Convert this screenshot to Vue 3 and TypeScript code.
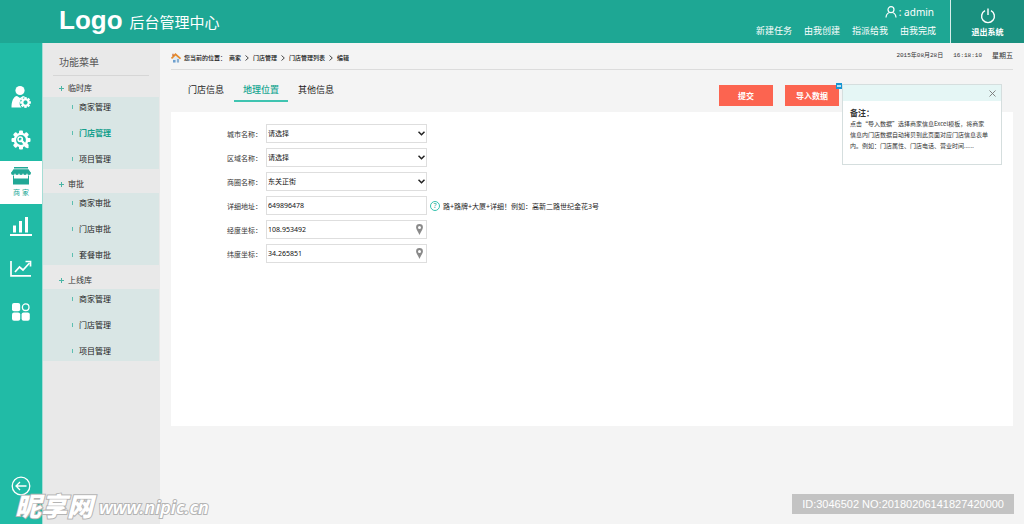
<script setup lang="ts">
import { ref } from 'vue'

type RailIcon = 'user' | 'gear' | 'shop' | 'bars' | 'trend' | 'grid'
interface RailItem { icon: RailIcon; label: string }
interface MenuGroup { title: string; items: string[] }
interface Field { id: string; label: string; kind: 'select' | 'text' | 'coord'; value: string; hint?: string }

const shortcuts: string[] = ['新建任务', '由我创建', '指派给我', '由我完成']

const rail: RailItem[] = [
  { icon: 'user', label: '用户' },
  { icon: 'gear', label: '设置' },
  { icon: 'shop', label: '商 家' },
  { icon: 'bars', label: '统计' },
  { icon: 'trend', label: '趋势' },
  { icon: 'grid', label: '应用' },
]
const activeRail = ref<RailIcon>('shop')

const groups: MenuGroup[] = [
  { title: '临时库', items: ['商家管理', '门店管理', '项目管理'] },
  { title: '审批', items: ['商家审批', '门店审批', '套餐审批'] },
  { title: '上线库', items: ['商家管理', '门店管理', '项目管理'] },
]
const activeMenu = ref('0-1')

const crumbs: string[] = ['商家', '门店管理', '门店管理列表', '编辑']
const tabs: string[] = ['门店信息', '地理位置', '其他信息']
const activeTab = ref(1)
const noteOpen = ref(true)

const fields = ref<Field[]>([
  { id: 'city', label: '城市名称', kind: 'select', value: '请选择' },
  { id: 'area', label: '区域名称', kind: 'select', value: '请选择' },
  { id: 'district', label: '商圈名称', kind: 'select', value: '东关正街' },
  { id: 'address', label: '详细地址', kind: 'text', value: '649896478', hint: '路+路牌+大厦+详细！例如：高新二路世纪金花3号' },
  { id: 'lng', label: '经度坐标', kind: 'coord', value: '108.953492' },
  { id: 'lat', label: '纬度坐标', kind: 'coord', value: '34.265851' },
])
const options: string[] = ['请选择', '东关正街']
const teeth: number[] = [0, 45, 90, 135, 180, 225, 270, 315]
</script>

<template>
  <div class="page">
    <header class="top">
      <div class="brand">
        <span class="logo">Logo</span>
        <h1>后台管理中心</h1>
      </div>
      <div class="account">
        <div class="who">
          <svg width="12" height="12" viewBox="0 0 12 12" fill="none" stroke="currentColor" stroke-width="1.200">
            <circle cx="6" cy="3.7" r="3" />
            <path d="M1 11.5C1.2 8.6 2.7 7 4.6 6.5M11 11.5C10.800 8.600 9.300 7 7.400 6.500" />
          </svg>
          <span>: admin</span>
        </div>
        <nav class="shortcuts">
          <a v-for="s in shortcuts" :key="s" href="#">{{ s }}</a>
        </nav>
      </div>
      <button class="logout" type="button">
        <svg width="16" height="16" viewBox="0 0 16 16" fill="none" stroke="currentColor" stroke-width="1.4">
          <path d="M5 2.600A6.400 6.400 0 1 0 11 2.600M8 0.500V7" />
        </svg>
        <span>退出系统</span>
      </button>
    </header>

    <div class="body">
      <nav class="rail">
        <button
          v-for="r in rail" :key="r.icon" type="button" class="rail-item"
          :class="{ on: r.icon === activeRail }" :aria-label="r.label" @click="activeRail = r.icon"
        >
          <svg v-if="r.icon === 'user'" width="22" height="24" viewBox="0 0 22 24">
            <circle cx="10" cy="5.500" r="4.600" fill="currentColor" />
            <path d="M1.500 22.500C1.500 16 3.500 11.500 7 11L10 13L13 11C14 11.200 15 11.600 15.500 12.200A6 6 0 0 0 11.500 22.500Z" fill="currentColor" />
            <g transform="translate(15.500 17.500)">
              <rect v-for="t in teeth" :key="t" x="-1.200" y="-5.400" width="2.400" height="3" fill="currentColor" :transform="`rotate(${t})`" />
              <circle r="3.200" fill="none" stroke="currentColor" stroke-width="2" />
            </g>
          </svg>
          <svg v-else-if="r.icon === 'gear'" width="20" height="20" viewBox="-10 -10 20 20">
            <rect v-for="t in teeth" :key="t" x="-2" y="-9.500" width="4" height="4" rx="1" fill="currentColor" :transform="`rotate(${t})`" />
            <circle r="6.100" fill="none" stroke="currentColor" stroke-width="2.400" />
            <path d="M0.500 0.500L6.500 7" stroke="currentColor" stroke-width="2.400" stroke-linecap="round" />
            <circle cx="-0.800" cy="-0.800" r="2.200" fill="none" stroke="currentColor" stroke-width="1.500" />
          </svg>
          <template v-else-if="r.icon === 'shop'">
            <svg width="20" height="18" viewBox="0 0 20 18" fill="currentColor">
              <path d="M3 0H17V1.500H3ZM2.500 2.300H17.500L20 6H0Z" />
              <path d="M0 5.500H20V6A2 2 0 0 1 16 6A2 2 0 0 1 12 6A2 2 0 0 1 8 6A2 2 0 0 1 4 6A2 2 0 0 1 0 6Z" />
              <path d="M2 8.500H3V11.500H17V8.500H18V17.500H2Z" />
            </svg>
            <span>{{ r.label }}</span>
          </template>
          <svg v-else-if="r.icon === 'bars'" width="22" height="20" viewBox="0 0 22 20" fill="currentColor">
            <path d="M0 18H22V20H0ZM3 9.500H6V16.500H3ZM9 5H12V16.500H9ZM15 1H18V16.500H15Z" />
          </svg>
          <svg v-else-if="r.icon === 'trend'" width="22" height="18" viewBox="0 0 22 18" fill="none" stroke="currentColor" stroke-width="1.700">
            <path d="M1 1V15.800H21M5 12L9.500 7L13 10L19.500 3" />
            <path d="M15.500 1.500H20.500V6.500" />
          </svg>
          <svg v-else width="18" height="18" viewBox="0 0 18 18" fill="currentColor">
            <rect x="0" y="0" width="8.200" height="8.200" rx="2" />
            <rect x="0" y="9.600" width="8.200" height="8.200" rx="2" />
            <rect x="9.600" y="9.600" width="8.200" height="8.200" rx="2" />
            <circle cx="13.700" cy="4.200" r="3.300" fill="none" stroke="currentColor" stroke-width="1.300" />
          </svg>
        </button>
        <button type="button" class="back" aria-label="返回">
          <svg width="20" height="20" viewBox="0 0 20 20" fill="none" stroke="currentColor" stroke-width="1.300">
            <circle cx="10" cy="10" r="8.800" />
            <path d="M15.500 10H5M9 6L5 10L9 14" />
          </svg>
        </button>
      </nav>

      <aside class="side">
        <h2>功能菜单</h2>
        <section v-for="(g, gi) in groups" :key="gi">
          <h3><i class="plus"></i>{{ g.title }}</h3>
          <ul>
            <li v-for="(m, mi) in g.items" :key="mi">
              <a href="#" :class="{ on: activeMenu === `${gi}-${mi}` }" @click.prevent="activeMenu = `${gi}-${mi}`">{{ m }}</a>
            </li>
          </ul>
        </section>
      </aside>

      <main class="main">
        <div class="location">
          <svg width="10" height="10" viewBox="0 0 10 10">
            <path d="M2 5L5 2.500L8.500 5V9.500H2Z" fill="#dfe9f2" />
            <path d="M2 7H4.500V9.500H2Z" fill="#6d9fce" />
            <path d="M6 6H8V9.500H6Z" fill="#8ab0d2" />
            <path d="M0.500 5.500L4.500 1.300L9.500 5.700" fill="none" stroke="#e58a2c" stroke-width="1.700" />
            <path d="M2 0.800V3" stroke="#c8622a" stroke-width="1.200" />
          </svg>
          <span>您当前的位置：</span>
          <template v-for="(c, ci) in crumbs" :key="c">
            <svg v-if="ci > 0" class="sep" width="4" height="6" viewBox="0 0 4 6" fill="none" stroke="#333" stroke-width="0.900"><path d="M0.500 0.500L3.300 3L0.500 5.500" /></svg>
            <a href="#">{{ c }}</a>
          </template>
          <div class="clock">
            <time>2015年08月28日</time>
            <time>16:18:10</time>
            <span class="weekday">星期五</span>
          </div>
        </div>

        <div class="toolbar">
          <div class="tabs" role="tablist">
            <button
              v-for="(t, ti) in tabs" :key="t" type="button" role="tab"
              :aria-selected="ti === activeTab" :class="{ on: ti === activeTab }" @click="activeTab = ti"
            >{{ t }}</button>
          </div>
          <div class="actions">
            <button type="button" class="action">提交</button>
            <div class="import">
              <button type="button" class="action">导入数据</button>
              <span class="badge"></span>
              <div v-if="noteOpen" class="note">
                <div class="note-bar">
                  <button type="button" aria-label="关闭" @click="noteOpen = false">
                    <svg width="7" height="7" viewBox="0 0 7 7" stroke="#777" stroke-width="0.900"><path d="M0.500 0.500L6.500 6.500M6.500 0.500L0.500 6.500" /></svg>
                  </button>
                </div>
                <div class="note-text">
                  <strong>备注：</strong>
                  <p>点击“导入数据”选择商家信息Excel模板，将商家<br>信息内门店数据自动拷贝到此页面对应门店信息表单<br>内。例如：门店属性、门店电话、营业时间......</p>
                </div>
              </div>
            </div>
          </div>
        </div>

        <form class="sheet" @submit.prevent>
          <div v-for="f in fields" :key="f.id" class="row">
            <label :for="f.id">{{ f.label }}：</label>
            <div class="control">
              <template v-if="f.kind === 'select'">
                <select :id="f.id" v-model="f.value">
                  <option v-for="o in options" :key="o">{{ o }}</option>
                </select>
                <svg class="mark" width="7" height="5" viewBox="0 0 7 5" fill="none" stroke="#222" stroke-width="1.500"><path d="M0.500 0.700L3.500 3.700L6.500 0.700" /></svg>
              </template>
              <template v-else>
                <input :id="f.id" v-model="f.value" type="text">
                <svg v-if="f.kind === 'coord'" class="mark pin" width="7" height="11" viewBox="0 0 7 11" fill="#8a8a8a">
                  <path fill-rule="evenodd" d="M3.500 0A3.400 3.400 0 0 1 6.900 3.500C6.900 5.500 4.800 7.500 3.500 11C2.200 7.500 0.100 5.500 0.100 3.500A3.400 3.400 0 0 1 3.500 0ZM3.500 2A1.500 1.500 0 1 0 3.500 5A1.500 1.500 0 1 0 3.500 2Z" />
                </svg>
              </template>
            </div>
            <span v-if="f.hint" class="hint"><i>?</i>{{ f.hint }}</span>
          </div>
        </form>
      </main>
    </div>

    <div class="watermark"><b>昵享网</b><span>www.nipic.cn</span></div>
    <div class="serial">ID:3046502 NO:20180206141827420000</div>
  </div>
</template>

<style>
body { margin: 0; }
</style>

<style scoped>
.page {
  position: relative;
  display: flex;
  flex-direction: column;
  min-height: 100vh;
  overflow: hidden;
  background: #f4f4f4;
  color: #333;
  font-family: "Noto Sans", "Noto Sans CJK SC", sans-serif;
  font-size: 7px;
}
.page * { box-sizing: border-box; }
button, input, select { font: inherit; color: inherit; margin: 0; padding: 0; border: 0; background: none; border-radius: 0; }
button { cursor: pointer; }
a { color: inherit; text-decoration: none; }
svg { display: block; flex: none; }
h1, h2, h3, p, ul { margin: 0; padding: 0; font-weight: 400; }
i { font-style: normal; }

.top { display: flex; height: 43px; background: #1ea794; color: #fff; }
.brand { display: flex; flex: 1; align-items: flex-start; padding-left: 59px; gap: 7px; }
.logo { font-family: "Liberation Sans", sans-serif; font-size: 26px; font-weight: 700; line-height: 40px; }
.brand h1 { font-size: 15px; line-height: 44px; }
.account { display: flex; flex-direction: column; align-items: flex-end; padding: 5px 14px 0 0; }
.who { display: flex; align-items: center; gap: 2px; padding-right: 2px; font-size: 10px; line-height: 14px; }
.shortcuts { display: flex; gap: 12px; padding-top: 5px; font-size: 9px; line-height: 14px; }
.logout { display: flex; flex-direction: column; align-items: center; gap: 2px; width: 74px; padding-top: 8px; border-left: 1px solid #d7efeb; background: #1a907f; color: #fff; font-size: 8px; font-weight: 700; line-height: 12px; }

.body { display: flex; flex: 1; }
.rail { display: flex; flex-direction: column; width: 43px; padding: 32px 0 28px; border-right: 1px solid #a5ddd5; background: #21bba6; color: #fff; }
.rail-item { display: flex; flex-direction: column; align-items: center; justify-content: center; height: 43px; }
.rail-item.on { background: #fff; color: #21a896; }
.rail-item span { padding-top: 3px; font-size: 7px; line-height: 10px; }
.back { display: flex; justify-content: center; margin-top: auto; }

.side { width: 117px; background: #e9e9e9; }
.side h2 { margin: 0 11px 0 10px; padding: 11px 0 4px 6px; border-bottom: 1px solid #d6d6d6; font-size: 10px; line-height: 17px; color: #555; }
.side section:first-of-type { margin-top: -3px; }
.side h3 { display: flex; align-items: center; gap: 4px; padding: 6px 0 0 16px; font-size: 8px; line-height: 18px; }
.plus { width: 5px; height: 5px; background: linear-gradient(#4bb5a5, #4bb5a5) center / 5px 1px no-repeat, linear-gradient(#4bb5a5, #4bb5a5) center / 1px 5px no-repeat; }
.side ul { display: flex; flex-direction: column; gap: 6px; margin-right: 1px; background: #d9e6e5; list-style: none; font-size: 8px; line-height: 20px; color: #222; }
.side li { display: flex; align-items: center; gap: 6px; padding-left: 29px; }
.side li::before { content: ""; width: 1px; height: 4px; background: #5dbfb1; }
.side a.on { color: #15a08c; font-weight: 700; }

.main { flex: 1; min-width: 0; padding: 0 11px; }
.location { display: flex; align-items: center; height: 27px; padding-top: 4px; border-bottom: 1px solid #dcdcdc; font-size: 6px; font-weight: 500; line-height: 10px; color: #111; }
.location > span { margin-left: 3px; padding-right: 3px; }
.sep { margin: 0 4px; }
.clock { display: flex; gap: 10px; margin: -4px 0 0 auto; font-family: "Liberation Mono", "Noto Sans CJK SC", monospace; font-weight: 400; color: #333; }
.weekday { font-size: 7px; }

.toolbar { display: flex; align-items: flex-start; padding: 10px 174px 6px 8px; }
.tabs { display: flex; flex: 1; gap: 1px; }
.tabs button { padding: 2px 9px; border-bottom: 2px solid transparent; font-size: 9px; line-height: 16px; color: #222; }
.tabs button.on { border-color: #3fc4b1; color: #15a591; font-weight: 500; }
.actions { display: flex; gap: 12px; padding-top: 5px; }
.action { display: block; width: 54px; height: 21px; background: #fc6450; color: #fff; font-size: 8px; font-weight: 700; }
.import { position: relative; }
.badge { position: absolute; top: -2px; right: -3px; width: 6px; height: 6px; border: 1px solid #1795d2; background: linear-gradient(#b5e0f5, #b5e0f5) center / 4px 2px no-repeat #1795d2; }
.note { position: absolute; top: -1px; left: calc(100% + 3px); width: 160px; border: 1px solid #d5dede; background: #fff; text-align: left; }
.note-bar { display: flex; align-items: center; justify-content: flex-end; height: 16px; padding-right: 5px; background: #e5f6f5; }
.note-text { padding: 6px 0 13px 7px; font-family: "Noto Sans CJK SC", sans-serif; font-size: 6px; line-height: 11px; white-space: nowrap; }
.note-text strong { display: block; font-size: 8px; }

.sheet { display: flex; flex-direction: column; gap: 5px; min-height: 60vh; padding: 12px 56px; background: #fff; }
.row { display: flex; align-items: center; }
.row label { width: 39px; white-space: nowrap; }
.control { position: relative; width: 161px; }
.control select, .control input { display: block; width: 100%; height: 19px; padding: 0 1px; border: 1px solid #dedede; background: #fff; color: #111; appearance: none; }
.mark { position: absolute; top: 7px; right: 2px; pointer-events: none; }
.pin { top: 4px; right: 4px; }
.hint { display: flex; align-items: center; gap: 3px; margin-left: 3px; color: #222; }
.hint i { width: 10px; height: 10px; border: 1px solid #35c2ae; border-radius: 50%; color: #21a896; line-height: 8px; text-align: center; }

.watermark { position: absolute; bottom: 3px; left: 15px; display: flex; align-items: center; gap: 6px; color: #fff; font-style: italic; line-height: 28px; paint-order: stroke fill; -webkit-text-stroke: 2px #b4b4b4; }
.watermark b { font-size: 26px; font-weight: 900; }
.watermark span { padding-top: 3px; font-size: 18px; font-weight: 600; }
.serial { position: absolute; right: 10px; bottom: 10px; padding: 0 10px; background: #c3c3c3; color: #fff; font: 11px/20px "Liberation Sans", sans-serif; }
</style>
